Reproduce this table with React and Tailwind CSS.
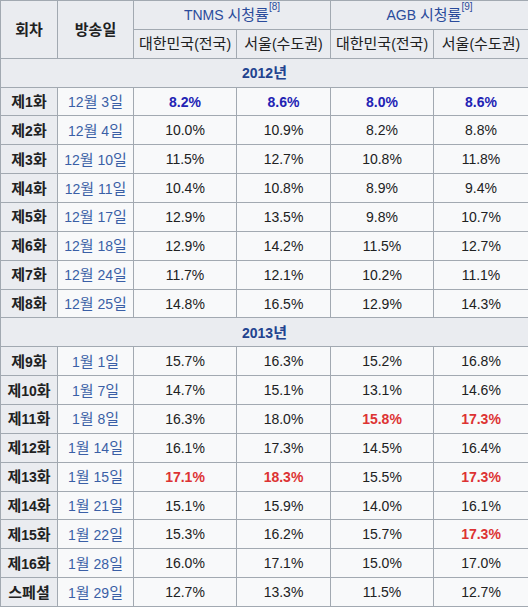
import React from "react";

const BLUE_B = "text-[#2323b4] font-bold";
const RED_B = "text-[#d33] font-bold";

const seasons = [
  {
    year: "2012년",
    rows: [
      ["제1화", "12월 3일", ["8.2%", "b"], ["8.6%", "b"], ["8.0%", "b"], ["8.6%", "b"]],
      ["제2화", "12월 4일", "10.0%", "10.9%", "8.2%", "8.8%"],
      ["제3화", "12월 10일", "11.5%", "12.7%", "10.8%", "11.8%"],
      ["제4화", "12월 11일", "10.4%", "10.8%", "8.9%", "9.4%"],
      ["제5화", "12월 17일", "12.9%", "13.5%", "9.8%", "10.7%"],
      ["제6화", "12월 18일", "12.9%", "14.2%", "11.5%", "12.7%"],
      ["제7화", "12월 24일", "11.7%", "12.1%", "10.2%", "11.1%"],
      ["제8화", "12월 25일", "14.8%", "16.5%", "12.9%", "14.3%"],
    ],
  },
  {
    year: "2013년",
    rows: [
      ["제9화", "1월 1일", "15.7%", "16.3%", "15.2%", "16.8%"],
      ["제10화", "1월 7일", "14.7%", "15.1%", "13.1%", "14.6%"],
      ["제11화", "1월 8일", "16.3%", "18.0%", ["15.8%", "r"], ["17.3%", "r"]],
      ["제12화", "1월 14일", "16.1%", "17.3%", "14.5%", "16.4%"],
      ["제13화", "1월 15일", ["17.1%", "r"], ["18.3%", "r"], "15.5%", ["17.3%", "r"]],
      ["제14화", "1월 21일", "15.1%", "15.9%", "14.0%", "16.1%"],
      ["제15화", "1월 22일", "15.3%", "16.2%", "15.7%", ["17.3%", "r"]],
      ["제16화", "1월 28일", "16.0%", "17.1%", "15.0%", "17.0%"],
      ["스페셜", "1월 29일", "12.7%", "13.3%", "11.5%", "12.7%"],
    ],
  },
];

// hangul is drawn a touch bigger than the latin digits, like the source font
function K({ children }) {
  return children.split(/([가-힣]+)/).map((part, i) =>
    /[가-힣]/.test(part) ? (
      <span key={i} className="text-[15px]">{part}</span>
    ) : (
      part
    )
  );
}

function Rating({ v }) {
  if (Array.isArray(v)) {
    const [text, kind] = v;
    return <span className={kind === "b" ? BLUE_B : RED_B}>{text}</span>;
  }
  return <span>{v}</span>;
}

const cell = "border border-[#a2a9b1] text-center align-middle p-0";

export default function App() {
  return (
    <div
      className="w-[528px] bg-white text-[#202122] text-[14px] leading-none"
      style={{ fontFamily: '"Liberation Sans", "Noto Sans CJK KR", sans-serif' }}
    >
      <table className="w-[528px] table-fixed border-collapse border border-[#a2a9b1]">
        <colgroup>
          <col className="w-[57px]" />
          <col className="w-[76px]" />
          <col className="w-[103px]" />
          <col className="w-[94px]" />
          <col className="w-[103px]" />
          <col className="w-[95px]" />
        </colgroup>
        <thead>
          <tr className="h-[28.86px] bg-[#eaecf0]">
            <th rowSpan={2} className={`${cell} font-bold`}><K>회차</K></th>
            <th rowSpan={2} className={`${cell} font-bold`}><K>방송일</K></th>
            <th colSpan={2} className={`${cell} font-normal text-[#2a4b9b]`}>
              <K>TNMS 시청률</K>
              <sup className="text-[10px] align-super">[8]</sup>
            </th>
            <th colSpan={2} className={`${cell} font-normal text-[#2a4b9b]`}>
              <K>AGB 시청률</K>
              <sup className="text-[10px] align-super">[9]</sup>
            </th>
          </tr>
          <tr className="h-[28.86px] bg-[#eaecf0]">
            <th className={`${cell} font-normal`}><K>대한민국(전국)</K></th>
            <th className={`${cell} font-normal`}><K>서울(수도권)</K></th>
            <th className={`${cell} font-normal`}><K>대한민국(전국)</K></th>
            <th className={`${cell} font-normal`}><K>서울(수도권)</K></th>
          </tr>
        </thead>
        <tbody>
          {seasons.map((s) => (
            <React.Fragment key={s.year}>
              <tr className="h-[28.86px] bg-[#eaecf0]">
                <th colSpan={6} className={`${cell} font-bold text-[#22438f]`}>
                  <K>{s.year}</K>
                </th>
              </tr>
              {s.rows.map((r) => (
                <tr key={r[0]} className="h-[28.86px] bg-[#f8f9fa]">
                  <th className={`${cell} bg-[#eaecf0] font-bold`}><K>{r[0]}</K></th>
                  <td className={`${cell} text-[#3a5fa6]`}><K>{r[1]}</K></td>
                  {r.slice(2).map((v, i) => (
                    <td key={i} className={cell}>
                      <Rating v={v} />
                    </td>
                  ))}
                </tr>
              ))}
            </React.Fragment>
          ))}
        </tbody>
      </table>
    </div>
  );
}
